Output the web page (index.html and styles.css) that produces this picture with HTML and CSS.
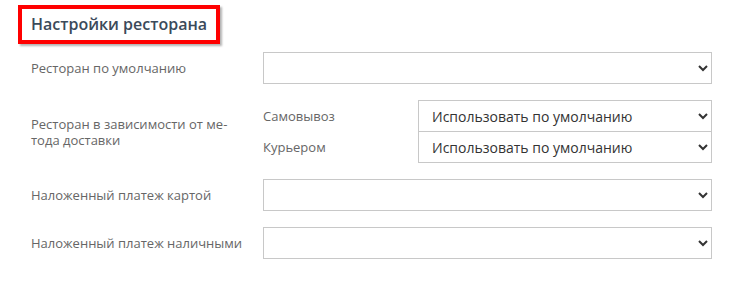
FILE: index.html
```html
<!DOCTYPE html>
<html lang="ru">
<head>
    <meta charset="UTF-8">
    <meta name="viewport" content="width=device-width, initial-scale=1.0">
    <title>Настройки ресторана</title>
    <link rel="stylesheet" href="styles.css">
</head>
<body>
    <div class="settings">
        <h2 class="settings-title">Настройки ресторана</h2>

        <div class="form-row">
            <label class="form-label">Ресторан по умолчанию</label>
            <div class="form-field">
                <select class="form-select"><option></option></select>
            </div>
        </div>

        <div class="form-row">
            <label class="form-label">Ресторан в зависимости от ме&shy;тода доставки</label>
            <div class="form-field sublist">
                <div class="sub-row">
                    <span class="sub-label">Самовывоз</span>
                    <select class="form-select"><option>Использовать по умолчанию</option></select>
                </div>
                <div class="sub-row">
                    <span class="sub-label">Курьером</span>
                    <select class="form-select"><option>Использовать по умолчанию</option></select>
                </div>
            </div>
        </div>

        <div class="form-row">
            <label class="form-label">Наложенный платеж картой</label>
            <div class="form-field">
                <select class="form-select"><option></option></select>
            </div>
        </div>

        <div class="form-row">
            <label class="form-label">Наложенный платеж наличными</label>
            <div class="form-field">
                <select class="form-select"><option></option></select>
            </div>
        </div>
    </div>
</body>
</html>
```

FILE: styles.css
```css
body {
    margin: 0;
    font-family: "Open Sans", Arial, sans-serif;
    background-color: #fff;
    color: #666;
}

.settings {
    padding: 5px 28px 0 18px;
    width: 694px;
}

.settings-title {
    display: inline-block;
    margin: 0 0 8px 0;
    padding: 4px 9px 5px 9px;
    border: 4px solid #f00;
    box-shadow: 2px 2px 2px rgba(0, 0, 0, 0.3);
    font-size: 16px;
    font-weight: 600;
    color: #3b4a5a;
    line-height: 22px;
}

.form-row {
    display: flex;
    align-items: center;
    margin-bottom: 16px;
    padding-left: 13px;
}

.form-label {
    width: 217px;
    padding-right: 15px;
    font-size: 13px;
    line-height: 16px;
    color: #666;
}

.form-field {
    flex: 1;
}

.form-select {
    width: 100%;
    height: 32px;
    border: 1px solid #c8c8c8;
    border-radius: 0;
    background-color: #fff;
    font-family: "Open Sans", Arial, sans-serif;
    font-size: 14px;
    color: #333;
    padding: 0 8px 0 9px;
    outline: none;
}

.sub-row {
    display: flex;
    align-items: center;
}

.sub-row + .sub-row {
    margin-top: -1px;
}

.sub-label {
    width: 155px;
    flex-shrink: 0;
    font-size: 13px;
    color: #666;
}
```
